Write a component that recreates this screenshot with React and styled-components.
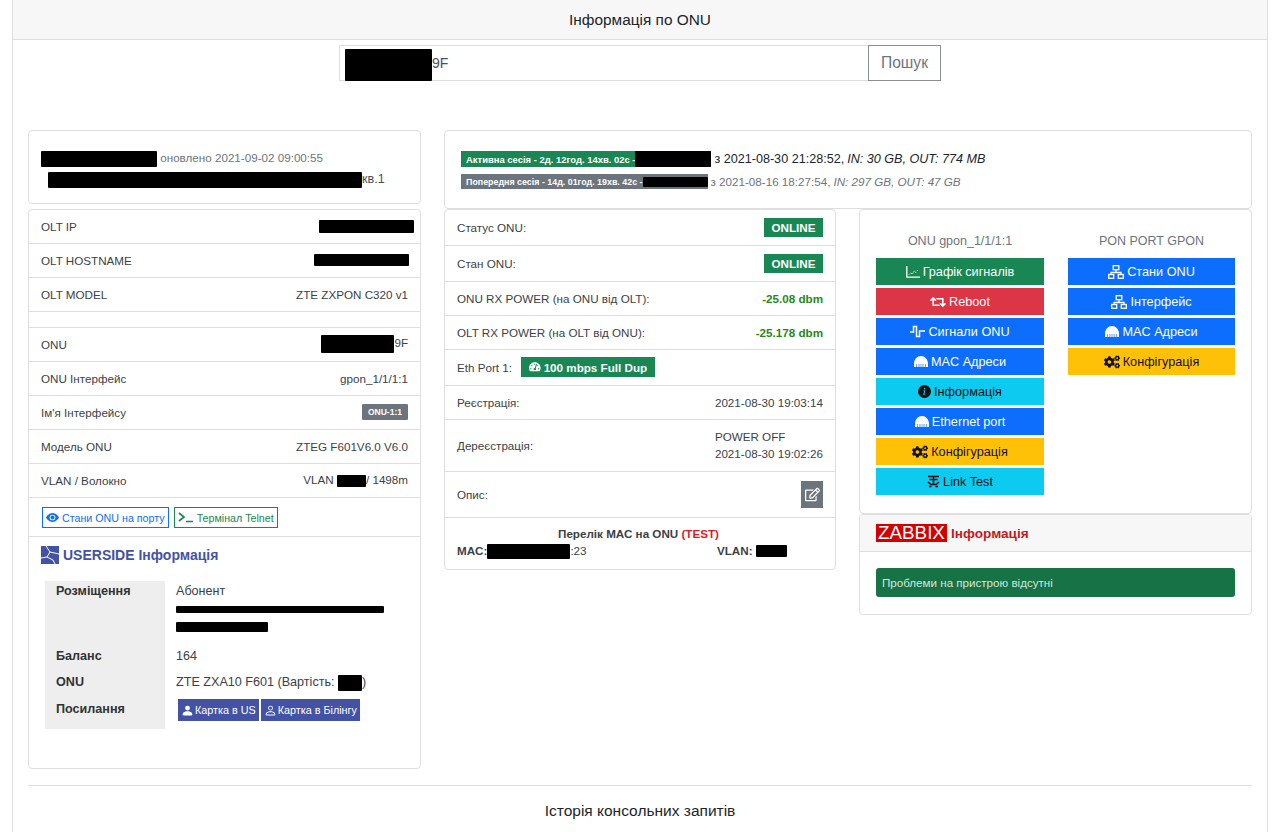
import React from "react";
import styled, { createGlobalStyle } from "styled-components";
import { BsInfoCircleFill, BsEyeFill, BsPersonFill, BsPerson } from "react-icons/bs";
import { FaCogs, FaRegEdit, FaRetweet, FaTachometerAlt } from "react-icons/fa";

const GlobalStyle = createGlobalStyle`
    html, body {
        margin: 0;
        height: 832px;
        overflow: hidden;
        background: #fff;
        color: #212529;
        font-family: "Liberation Sans", Arial, sans-serif;
    }
    * {
        box-sizing: border-box;
    }
`

const Page = styled.div`
    margin: 0 12px;
    height: 832px;
    border-left: 1px solid #dfdfdf;
    border-right: 1px solid #dfdfdf;
    overflow: hidden;
`

const PageHeader = styled.div`
    height: 40px;
    background: #f7f7f7;
    border-bottom: 1px solid #dfdfdf;
    text-align: center;
    font-size: 15.4px;
    line-height: 39px;
`

const PageBody = styled.div`
    padding: 5px 15px 0;
`

const SearchForm = styled.div`
    display: flex;
    width: 602px;
    height: 36px;
    margin: 0 auto 49px;
`

const SearchInput = styled.div`
    flex: 1;
    display: flex;
    align-items: center;
    border: 1px solid #dedede;
    border-right: 0;
    padding-left: 5px;
    font-size: 14px;
    color: #495057;
`

const SearchButton = styled.div`
    width: 73px;
    border: 1px solid #8a8f94;
    color: #6c757d;
    font-size: 15.6px;
    line-height: 34px;
    text-align: center;
`

const Columns = styled.div`
    display: grid;
    grid-template-columns: 393px 808px;
    gap: 23px;
`

const Stack = styled.div`
    display: flex;
    flex-direction: column;
    gap: ${p => p.$gap || 0}px;
`

const Split = styled.div`
    display: grid;
    grid-template-columns: 392px 393px;
    gap: 23px;
    align-items: start;
`

const Card = styled.div`
    background: #fff;
    border: 1px solid #dfdfdf;
    border-radius: 4px;
    height: ${p => (p.$height ? `${p.$height}px` : "auto")};
    overflow: hidden;
`

const Redact = styled.span`
    display: inline-block;
    width: ${p => p.$w}px;
    height: ${p => p.$h || 14}px;
    margin-left: ${p => p.$ml || 0}px;
    margin-right: ${p => p.$mr || 0}px;
    margin-top: ${p => p.$mt || 0}px;
    background: #000;
    border-radius: 1px;
    vertical-align: middle;
`

const Updated = styled.div`
    padding: 16px 12px 0;
    font-size: 11.65px;
    line-height: 21px;
    color: #6c757d;
`

const AddressLine = styled.div`
    padding-left: 19px;
    margin-top: 1px;
    font-size: 12.6px;
    line-height: 21px;
    color: #495057;
`

const SessionLine = styled.div`
    padding-left: 16px;
    height: ${p => p.$height}px;
    margin-top: ${p => p.$top}px;
    display: flex;
    align-items: center;
    gap: 3px;
    font-size: ${p => (p.$muted ? 11.65 : 12.6)}px;
    color: ${p => (p.$muted ? "#6c757d" : "#212529")};
`

const SessionBadge = styled.span`
    display: inline-flex;
    align-items: center;
    height: ${p => (p.$muted ? 15 : 16)}px;
    padding-left: 5px;
    background: ${p => (p.$muted ? "#6c757d" : "#198754")};
    color: #fff;
    font-size: ${p => (p.$muted ? 8.9 : 9.45)}px;
    font-weight: bold;
    white-space: nowrap;
`

const Row = styled.div`
    display: flex;
    align-items: center;
    justify-content: ${p => (p.$start ? "flex-start" : "space-between")};
    gap: ${p => (p.$start ? 9 : 0)}px;
    height: ${p => p.$height || 34}px;
    padding: 0 12px 1px;
    border-bottom: 1px solid #dfdfdf;
    font-size: 11.65px;
    color: #3c4146;
`

const Spacer = styled.div`
    height: 16px;
    border-bottom: 1px solid #dfdfdf;
`

const SmallBadge = styled.span`
    background: #6c757d;
    color: #fff;
    font-size: 8.5px;
    font-weight: bold;
    padding: 3px 6px;
    border-radius: 1px;
`

const LinkRow = styled.div`
    display: flex;
    gap: 5px;
    height: 39px;
    padding: 9px 13px 0;
    border-bottom: 1px solid #dfdfdf;
`

const OutlineLink = styled.span`
    display: inline-flex;
    align-items: center;
    gap: 3px;
    height: 21px;
    padding: 0 3px;
    border: 1px solid ${p => p.$color};
    color: ${p => p.$color};
    font-size: 10.7px;
    white-space: nowrap;
`

const UsersideTitle = styled.div`
    display: flex;
    align-items: center;
    gap: 4px;
    padding: 9px 12px 0;
    color: #4352a5;
    font-size: 14px;
    font-weight: bold;
`

const InfoTable = styled.div`
    display: grid;
    grid-template-columns: 120px 1fr;
    margin: 17px 0 0 16px;
    font-size: 12.6px;
`

const InfoHead = styled.div`
    background: #eee;
    padding-left: 11px;
    font-weight: bold;
    color: #333;
    height: ${p => p.$height}px;
    padding-top: ${p => p.$top || 0}px;
    line-height: 18px;
`

const InfoCell = styled.div`
    padding-left: 11px;
    height: ${p => p.$height}px;
    padding-top: ${p => p.$top || 0}px;
    line-height: 18px;
    color: #3c4146;
`

const RedactLine = styled.div`
    height: ${p => p.$height}px;
    display: flex;
    align-items: center;
`

const PurpleButton = styled.span`
    display: inline-flex;
    align-items: center;
    gap: 1px;
    height: 22px;
    padding: 0 3px;
    margin-left: ${p => p.$ml || 0}px;
    background: #4352a5;
    color: #fff;
    font-size: 10.8px;
    white-space: nowrap;
`

const OnlineBadge = styled.span`
    display: inline-block;
    width: 59px;
    height: 19px;
    background: #198754;
    color: #fff;
    font-size: 11.65px;
    font-weight: bold;
    line-height: 19px;
    text-align: center;
`

const Power = styled.b`
    color: #1f8a16;
`

const SpeedBadge = styled.span`
    display: inline-flex;
    align-items: center;
    gap: 3px;
    height: 20px;
    padding: 0 8px;
    background: #198754;
    color: #fff;
    font-size: 11.65px;
    font-weight: bold;
`

const DateBlock = styled.div`
    line-height: 17px;
`

const EditButton = styled.span`
    display: flex;
    align-items: center;
    justify-content: center;
    width: 22px;
    height: 27px;
    background: #6c757d;
    color: #fff;
    font-size: 15px;
`

const MacBlock = styled.div`
    padding: 8px 12px 0;
    height: 51px;
    font-size: 11.65px;
    color: #3c4146;
    line-height: 16.5px;
`

const MacTitle = styled.div`
    text-align: center;
    font-weight: bold;
    padding-right: 3px;
`

const TestMark = styled.span`
    color: #e01b24;
`

const MacLine = styled.div`
    display: grid;
    grid-template-columns: 260px 1fr;
`

const ButtonGrid = styled.div`
    display: grid;
    grid-template-columns: 168px 167px;
    gap: 24px;
    padding: 24px 16px 15px;
`

const ButtonTitle = styled.div`
    text-align: center;
    font-size: 12.5px;
    line-height: 15px;
    color: #6c757d;
    margin-bottom: 9px;
`

const ActionButton = styled.div`
    display: flex;
    align-items: center;
    justify-content: center;
    gap: 3px;
    height: 27px;
    margin-bottom: 3px;
    background: ${p => p.$bg};
    color: ${p => (p.$dark ? "#111" : "#fff")};
    font-size: 12.7px;
`

const ZabbixHeader = styled.div`
    display: flex;
    align-items: center;
    gap: 4px;
    height: 37px;
    padding: 0 16px;
    background: #f7f7f7;
    border-bottom: 1px solid #dfdfdf;
    color: #c81818;
    font-size: 13.6px;
    font-weight: bold;
`

const ZabbixLogo = styled.span`
    width: 71px;
    height: 18px;
    background: #d40000;
    color: #fff;
    font-size: 18.8px;
    font-weight: normal;
    line-height: 18px;
    text-align: center;
`

const ZabbixBody = styled.div`
    padding: 16px 16px 17px;
`

const Alert = styled.div`
    height: 29px;
    padding-left: 6px;
    background: #177245;
    border-radius: 3px;
    color: #d1e7dd;
    font-size: 11.6px;
    line-height: 29px;
`

const Divider = styled.div`
    margin-top: 16px;
    border-top: 1px solid #dfdfdf;
    height: 51px;
    font-size: 15.5px;
    line-height: 50px;
    text-align: center;
`

const ChartIcon = () => (
    <svg width="14" height="12" viewBox="0 0 14 12" fill="none" stroke="currentColor">
        <path d="M.8 0v11.2H14" strokeWidth="1.3" />
        <path d="M3 8.5l1.5-1.5 2 1 1.5-3 2 1.5L12 3.5" strokeWidth="1" strokeDasharray="1.2 1.2" />
    </svg>
)

const SignalIcon = () => (
    <svg width="15" height="13" viewBox="0 0 15 13" fill="none" stroke="currentColor" strokeWidth="1.5">
        <path d="M0 7h3.5V1.5h3v10h3V6H15" />
    </svg>
)

const DomeIcon = () => (
    <svg width="14" height="11" viewBox="0 0 14 11" fill="currentColor">
        <path d="M7 0C3 0 .6 3 0 7v4h2V8h.6v3h2V8h.7v3h1.4V8h.6v3h1.4V8h.7v3h1.8V8h.6v3H14V7C13.4 3 11 0 7 0z" />
    </svg>
)

const NetworkIcon = () => (
    <svg width="16" height="14" viewBox="0 0 16 14" fill="none" stroke="currentColor" strokeWidth="1.3">
        <rect x="5.2" y=".7" width="5.6" height="4" />
        <path d="M8 4.7v2.8M3 9.5v-2h10v2" />
        <rect x=".7" y="9.5" width="5" height="3.8" />
        <rect x="10.3" y="9.5" width="5" height="3.8" />
    </svg>
)

const LinkIcon = () => (
    <svg width="13" height="13" viewBox="0 0 13 13" fill="none" stroke="currentColor" strokeWidth="1.6">
        <path d="M1 1.5h11M2.5 4.5h8M6.5 1.5v8M1 7l3 2.5h5L12 7M2 11.5h2.5M8.5 11.5H11" />
    </svg>
)

const TerminalIcon = () => (
    <svg width="16" height="11" viewBox="0 0 16 11" fill="none" stroke="#198754" strokeWidth="1.7">
        <path d="M1 1l5 4-5 4M8 9.5h7" />
    </svg>
)

const UsersideIcon = () => (
    <svg width="18" height="18" viewBox="0 0 18 18">
        <rect width="18" height="18" fill="#4352a5" />
        <path d="M5 0l4 6 9 2M9 6l-3 5-6 1M6 11l6 3 2 4" fill="none" stroke="#fff" strokeWidth="1" />
    </svg>
)

const leftRows = [
    ["OLT IP", <Redact $w={95} $h={13} $mr={-6} key="r" />],
    ["OLT HOSTNAME", <Redact $w={95} $h={12} $mr={-1} key="r" />],
    ["OLT MODEL", "ZTE ZXPON C320 v1"],
]

const onuRows = [
    ["ONU", <span key="r"><Redact $w={73} $h={18} />9F</span>],
    ["ONU Інтерфейс", "gpon_1/1/1:1"],
    ["Ім'я Інтерфейсу", <SmallBadge key="b">ONU-1:1</SmallBadge>],
    ["Модель ONU", "ZTEG F601V6.0 V6.0"],
    ["VLAN / Волокно", <span key="v">VLAN <Redact $w={29} $h={12} />/ 1498m</span>],
]

const onuButtons = [
    { bg: "#198754", icon: <ChartIcon />, label: "Графік сигналів" },
    { bg: "#dc3545", icon: <FaRetweet size={16} />, label: "Reboot" },
    { bg: "#0d6efd", icon: <SignalIcon />, label: "Сигнали ONU" },
    { bg: "#0d6efd", icon: <DomeIcon />, label: "MAC Адреси" },
    { bg: "#0dcaf0", dark: true, icon: <BsInfoCircleFill size={13} />, label: "Інформація" },
    { bg: "#0d6efd", icon: <DomeIcon />, label: "Ethernet port" },
    { bg: "#ffc107", dark: true, icon: <FaCogs size={16} />, label: "Конфігурація" },
    { bg: "#0dcaf0", dark: true, icon: <LinkIcon />, label: "Link Test" },
]

const portButtons = [
    { bg: "#0d6efd", icon: <NetworkIcon />, label: "Стани ONU" },
    { bg: "#0d6efd", icon: <NetworkIcon />, label: "Інтерфейс" },
    { bg: "#0d6efd", icon: <DomeIcon />, label: "MAC Адреси" },
    { bg: "#ffc107", dark: true, icon: <FaCogs size={16} />, label: "Конфігурація" },
]

const ButtonColumn = ({ title, buttons }) => (
    <div>
        <ButtonTitle>{title}</ButtonTitle>
        {buttons.map((b, i) => (
            <ActionButton key={i} $bg={b.bg} $dark={b.dark}>{b.icon} {b.label}</ActionButton>
        ))}
    </div>
)

export default function App() {
    return (
        <>
            <GlobalStyle />
            <Page>
                <PageHeader>Інформація по ONU</PageHeader>
                <PageBody>
                    <SearchForm>
                        <SearchInput><Redact $w={87} $h={32} $mt={4} />9F</SearchInput>
                        <SearchButton>Пошук</SearchButton>
                    </SearchForm>
                    <Columns>
                        <Stack $gap={5}>
                            <Card $height={74}>
                                <Updated><Redact $w={116} $h={16} /> оновлено 2021-09-02 09:00:55</Updated>
                                <AddressLine><Redact $w={314} $h={16} />кв.1</AddressLine>
                            </Card>
                            <Card $height={560}>
                                {leftRows.map(([k, v]) => <Row key={k}><span>{k}</span>{v}</Row>)}
                                <Spacer />
                                {onuRows.map(([k, v]) => <Row key={k}><span>{k}</span>{v}</Row>)}
                                <LinkRow>
                                    <OutlineLink $color="#0d6efd"><BsEyeFill size={13} /> Стани ONU на порту</OutlineLink>
                                    <OutlineLink $color="#198754"><TerminalIcon /> Термінал Telnet</OutlineLink>
                                </LinkRow>
                                <UsersideTitle><UsersideIcon /> USERSIDE Інформація</UsersideTitle>
                                <InfoTable>
                                    <InfoHead $height={65} $top={1}>Розміщення</InfoHead>
                                    <InfoCell $height={65} $top={1}>
                                        Абонент
                                        <RedactLine $height={18}><Redact $w={208} $h={7} /></RedactLine>
                                        <RedactLine $height={18}><Redact $w={92} $h={10} /></RedactLine>
                                    </InfoCell>
                                    <InfoHead $height={26} $top={1}>Баланс</InfoHead>
                                    <InfoCell $height={26} $top={1}>164</InfoCell>
                                    <InfoHead $height={27} $top={1}>ONU</InfoHead>
                                    <InfoCell $height={27} $top={1}>ZTE ZXA10 F601 (Вартість: <Redact $w={24} $h={16} />)</InfoCell>
                                    <InfoHead $height={30} $top={1}>Посилання</InfoHead>
                                    <InfoCell $height={30}>
                                        <PurpleButton $ml={2}><BsPersonFill size={13} /> Картка в US</PurpleButton>
                                        <PurpleButton $ml={2}><BsPerson size={13} /> Картка в Білінгу</PurpleButton>
                                    </InfoCell>
                                </InfoTable>
                            </Card>
                        </Stack>
                        <Stack>
                            <Card $height={79}>
                                <SessionLine $height={16} $top={20}>
                                    <SessionBadge>Активна сесія - 2д. 12год. 14хв. 02с - <Redact $w={76} $h={16} /></SessionBadge>
                                    з 2021-08-30 21:28:52, <i>IN: 30 GB, OUT: 774 MB</i>
                                </SessionLine>
                                <SessionLine $height={15} $top={7} $muted>
                                    <SessionBadge $muted>Попередня сесія - 14д. 01год. 19хв. 42с - <Redact $w={65} $h={10} /></SessionBadge>
                                    з 2021-08-16 18:27:54, <i>IN: 297 GB, OUT: 47 GB</i>
                                </SessionLine>
                            </Card>
                            <Split>
                                <Card>
                                    <Row $height={36}><span>Статус ONU:</span><OnlineBadge>ONLINE</OnlineBadge></Row>
                                    <Row $height={36}><span>Стан ONU:</span><OnlineBadge>ONLINE</OnlineBadge></Row>
                                    <Row><span>ONU RX POWER (на ONU від OLT):</span><Power>-25.08 dbm</Power></Row>
                                    <Row><span>OLT RX POWER (на OLT від ONU):</span><Power>-25.178 dbm</Power></Row>
                                    <Row $height={36} $start><span>Eth Port 1:</span><SpeedBadge><FaTachometerAlt /> 100 mbps Full Dup</SpeedBadge></Row>
                                    <Row><span>Реєстрація:</span><span>2021-08-30 19:03:14</span></Row>
                                    <Row $height={52}><span>Дереєстрація:</span><DateBlock>POWER OFF<br />2021-08-30 19:02:26</DateBlock></Row>
                                    <Row $height={46}><span>Опис:</span><EditButton><FaRegEdit /></EditButton></Row>
                                    <MacBlock>
                                        <MacTitle>Перелік МАС на ONU <TestMark>(TEST)</TestMark></MacTitle>
                                        <MacLine>
                                            <span><b>MAC:</b><Redact $w={83} $h={15} />:23</span>
                                            <span><b>VLAN:</b> <Redact $w={31} $h={12} /></span>
                                        </MacLine>
                                    </MacBlock>
                                </Card>
                                <Stack>
                                    <Card>
                                        <ButtonGrid>
                                            <ButtonColumn title="ONU gpon_1/1/1:1" buttons={onuButtons} />
                                            <ButtonColumn title="PON PORT GPON" buttons={portButtons} />
                                        </ButtonGrid>
                                    </Card>
                                    <Card>
                                        <ZabbixHeader><ZabbixLogo>ZABBIX</ZabbixLogo> Інформація</ZabbixHeader>
                                        <ZabbixBody><Alert>Проблеми на пристрою відсутні</Alert></ZabbixBody>
                                    </Card>
                                </Stack>
                            </Split>
                        </Stack>
                    </Columns>
                    <Divider>Історія консольних запитів</Divider>
                </PageBody>
            </Page>
        </>
    );
}
